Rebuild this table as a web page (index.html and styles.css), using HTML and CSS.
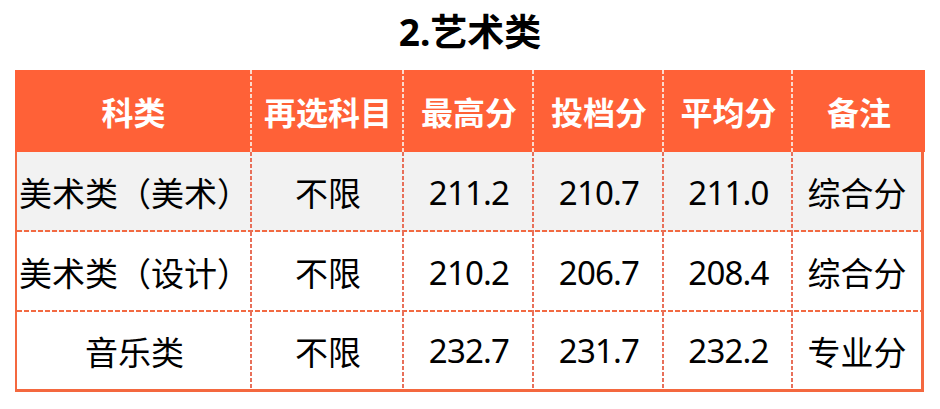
FILE: index.html
```html
<!DOCTYPE html>
<html lang="zh-CN">
<head>
<meta charset="utf-8">
<link rel="stylesheet" href="styles.css">
</head>
<body>
<h1 class="title">2.艺术类</h1>
<div class="table">
  <div class="row head">
    <div class="cell">科类</div>
    <div class="cell">再选科目</div>
    <div class="cell">最高分</div>
    <div class="cell">投档分</div>
    <div class="cell">平均分</div>
    <div class="cell last">备注</div>
  </div>
  <div class="body">
    <div class="row r1 grey">
      <div class="cell">美术类（美术）</div>
      <div class="cell">不限</div>
      <div class="cell num">211.2</div>
      <div class="cell num">210.7</div>
      <div class="cell num">211.0</div>
      <div class="cell last">综合分</div>
    </div>
    <div class="row r1">
      <div class="cell">美术类（设计）</div>
      <div class="cell">不限</div>
      <div class="cell num">210.2</div>
      <div class="cell num">206.7</div>
      <div class="cell num">208.4</div>
      <div class="cell last">综合分</div>
    </div>
    <div class="row r3">
      <div class="cell">音乐类</div>
      <div class="cell">不限</div>
      <div class="cell num">232.7</div>
      <div class="cell num">231.7</div>
      <div class="cell num">232.2</div>
      <div class="cell last">专业分</div>
    </div>
  </div>
</div>
</body>
</html>
```
FILE: styles.css
```css
html, body {
  margin: 0;
  padding: 0;
  background: #ffffff;
}
body {
  width: 940px;
  height: 409px;
  overflow: hidden;
  font-family: "Noto Sans", "Noto Sans CJK SC", sans-serif;
  color: #000;
}
.title {
  margin: 0;
  height: 70px;
  line-height: 64px;
  text-align: center;
  font-size: 37px;
  font-weight: 700;
  color: #000;
}
.table {
  width: 910px;
  margin-left: 15px;
}
.row {
  display: grid;
  align-items: stretch;
}
.cell {
  display: flex;
  align-items: center;
  justify-content: center;
  white-space: nowrap;
  background-repeat: no-repeat;
}
.head {
  height: 82px;
  background: #ff6137;
  grid-template-columns: 237px 152px 130px 130px 129px 132px;
  color: #fff;
  font-weight: 700;
  font-size: 32px;
}
.head .cell {
  background-image: repeating-linear-gradient(to bottom, #fbd9cc 0 4px, rgba(255, 97, 55, 0) 4px 6px);
  background-size: 2px 100%;
  background-position: right top;
}
.head .cell.last {
  background-image: none;
}
.body {
  border-left: 2px solid #f4683f;
  border-right: 3px solid #f4683f;
  border-bottom: 3px solid #f4683f;
  margin-right: 1px;
  font-size: 33px;
}
.body .row {
  grid-template-columns: 235px 152px 130px 130px 129px 128px;
  background-image: repeating-linear-gradient(to right, #f26a42 0 5px, rgba(242, 106, 66, 0) 5px 7px);
  background-size: 100% 2px;
  background-position: left bottom;
  background-repeat: no-repeat;
}
.body .r1 {
  height: 80px;
}
.body .r3 {
  height: 77px;
  background-image: none;
}
.body .grey {
  background-color: #f2f2f2;
}
.body .cell {
  background-image: repeating-linear-gradient(to bottom, #e8705a 0 4px, rgba(232, 112, 90, 0) 4px 6px);
  background-size: 2px 100%;
  background-position: right top;
}
.body .cell.last {
  background-image: none;
}
.body .num {
  letter-spacing: -0.8px;
}
```
